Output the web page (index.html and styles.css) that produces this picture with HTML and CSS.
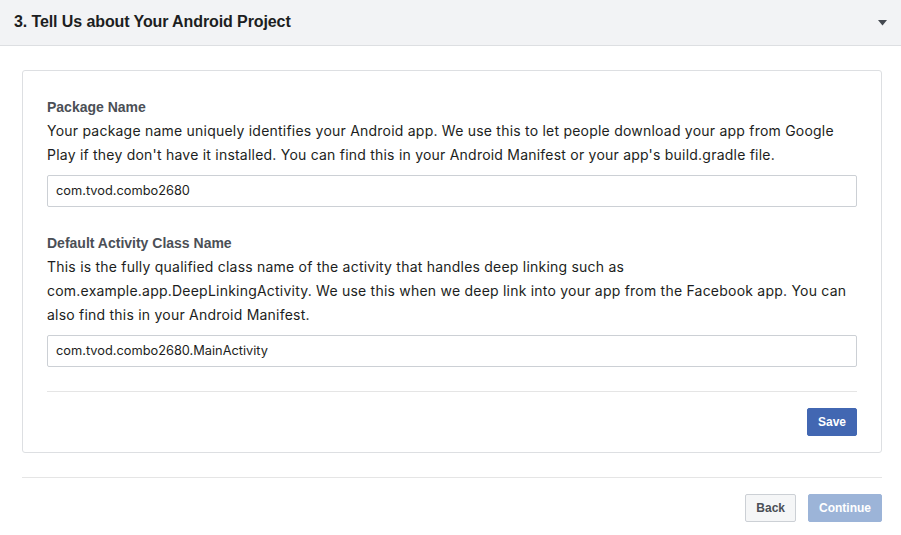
FILE: index.html
```html
<!DOCTYPE html>
<html>
<head>
<meta charset="utf-8">
<link rel="stylesheet" href="styles.css">
</head>
<body>
<div class="header">
  <div class="title">3. Tell Us about Your Android Project</div>
  <svg class="caret" width="9" height="6" viewBox="0 0 9 6"><path d="M0 0H9L4.5 5.5Z" fill="#444950"/></svg>
</div>
<div class="content">
  <div class="card">
    <div class="field">
      <div class="label">Package Name</div>
      <div class="desc">Your package name uniquely identifies your Android app. We use this to let people download your app from Google Play if they don't have it installed. You can find this in your Android Manifest or your app's build.gradle file.</div>
      <div class="input">com.tvod.combo2680</div>
    </div>
    <div class="field">
      <div class="label">Default Activity Class Name</div>
      <div class="desc">This is the fully qualified class name of the activity that handles deep linking such as com.example.app.DeepLinkingActivity. We use this when we deep link into your app from the Facebook app. You can also find this in your Android Manifest.</div>
      <div class="input">com.tvod.combo2680.MainActivity</div>
    </div>
    <div class="card-footer">
      <button class="btn primary">Save</button>
    </div>
  </div>
  <div class="footer">
    <button class="btn secondary">Back</button>
    <button class="btn disabled">Continue</button>
  </div>
</div>
</body>
</html>
```
FILE: styles.css
```css
* { box-sizing: border-box; }
html, body { margin: 0; padding: 0; background: #fff; }
body {
  font-family: Inter, "Liberation Sans", Arial, sans-serif;
  color: #1c1e21;
  width: 901px;
}
.header {
  height: 46px;
  background: #f2f3f5;
  border-bottom: 1px solid #dddfe2;
  display: flex;
  align-items: center;
  justify-content: space-between;
  padding: 0 14px 2px 14px;
}
.title {
  font-family: "Liberation Sans", Arial, sans-serif;
  font-size: 16px;
  font-weight: bold;
  letter-spacing: -0.1px;
  color: #1c1e21;
}
.caret { margin-top: 2px; }
.content {
  padding: 24px 19px 0 22px;
}
.card {
  border: 1px solid #dddfe2;
  border-radius: 3px;
  padding: 24px 24px 16px 24px;
}
.field { margin-bottom: 24px; }
.label {
  font-family: "Liberation Sans", Arial, sans-serif;
  font-size: 14px;
  font-weight: bold;
  color: #4b4f56;
  line-height: 24px;
}
.desc {
  font-size: 14px;
  letter-spacing: 0.22px;
  line-height: 24px;
  color: #1c1e21;
}
.input {
  margin-top: 8px;
  height: 32px;
  border: 1px solid #ccd0d5;
  border-radius: 2px;
  font-size: 12.8px;
  line-height: 30px;
  padding: 0 8px;
  color: #1c1e21;
}
.card-footer {
  border-top: 1px solid #e5e5e5;
  padding-top: 16px;
  display: flex;
  justify-content: flex-end;
}
.btn {
  font-family: "Liberation Sans", Arial, sans-serif;
  font-size: 12px;
  font-weight: bold;
  height: 28px;
  padding: 0 10px;
  border-radius: 2px;
  border: 1px solid;
  cursor: pointer;
}
.primary {
  background: #4267b2;
  border-color: #4267b2;
  color: #fff;
}
.secondary {
  background: #f5f6f7;
  border-color: #ccd0d5;
  color: #4b4f56;
}
.disabled {
  background: #9cb4d8;
  border-color: #9cb4d8;
  color: #fff;
}
.footer {
  margin-top: 24px;
  border-top: 1px solid #e5e5e5;
  padding-top: 16px;
  display: flex;
  justify-content: flex-end;
  gap: 12px;
}
```
